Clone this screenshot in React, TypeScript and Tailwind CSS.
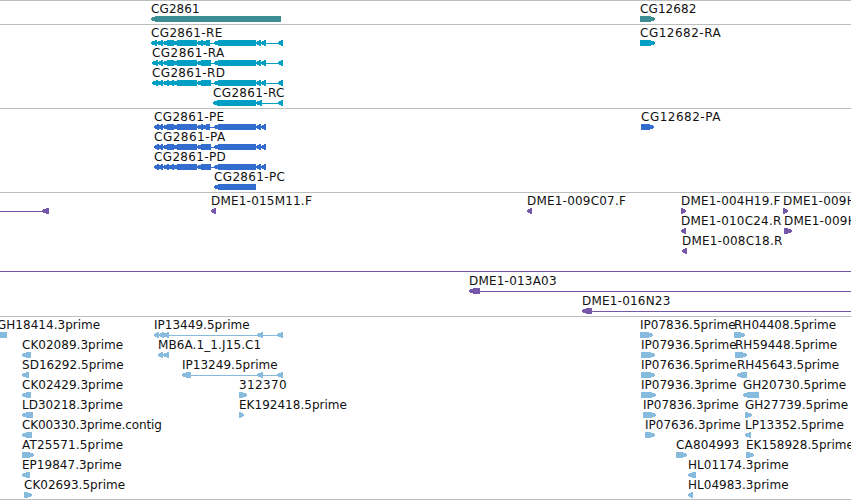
import React from 'react';

type Segment = [start: number, end: number, dir: 'l' | 'r' | 'b'];

interface Feature {
  label?: string;
  x: number;
  // visible width of the label, longer names are cut off
  w?: number;
  className?: string;
  segments: Segment[];
  line?: [number, number];
}

interface Track {
  color: string;
  tracking: string;
  rows: Feature[][];
}

const geneModel = (shift: number): Segment[] => [
  [151 + shift, 157 + shift, 'l'],
  [157 + shift, 163, 'l'],
  [163, 174, 'l'],
  [173, 197, 'l'],
];

const rightExons: Segment[] = [
  [214, 256, 'l'],
  [256, 261, 'l'],
  [261, 266, 'l'],
];

const tracks: Track[] = [
  {
    color: 'text-[#3b8e93]',
    tracking: 'tracking-[0.1px]',
    rows: [
      [
        { label: 'CG2861', x: 151, segments: [[151, 281, 'l']] },
        { label: 'CG12682', x: 640, segments: [[640, 655, 'r']] },
      ],
    ],
  },
  {
    color: 'text-[#009fc3]',
    tracking: 'tracking-[0.35px]',
    rows: [
      [
        { label: 'CG2861-RE', x: 151, segments: [...geneModel(0), [197, 203, 'l'], [202, 210, 'l'], ...rightExons, [278, 283, 'l']], line: [151, 283] },
        { label: 'CG12682-RA', x: 640, className: 'tracking-[0.5px]', segments: [[640, 655, 'r']] },
      ],
      [{ label: 'CG2861-RA', x: 152, className: 'tracking-[0.45px]', segments: [...geneModel(1), [197, 211, 'l'], ...rightExons, [278, 283, 'l']], line: [152, 283] }],
      [{ label: 'CG2861-RD', x: 152, segments: [[152, 158, 'l'], [157, 163, 'l'], [163, 169, 'l'], [168, 174, 'l'], [173, 197, 'l'], [197, 211, 'l'], ...rightExons, [278, 283, 'l']], line: [152, 283] }],
      [{ label: 'CG2861-RC', x: 213, segments: [[213, 256, 'l'], [256, 262, 'l'], [278, 283, 'l']], line: [213, 283] }],
    ],
  },
  {
    color: 'text-[#316cce]',
    tracking: 'tracking-[0.35px]',
    rows: [
      [
        { label: 'CG2861-PE', x: 154, segments: [[154, 159, 'l'], [158, 163, 'l'], [163, 174, 'l'], [173, 197, 'l'], [197, 203, 'l'], [202, 210, 'l'], ...rightExons], line: [154, 266] },
        { label: 'CG12682-PA', x: 641, className: 'tracking-[0.5px]', segments: [[641, 654, 'r']] },
      ],
      [{ label: 'CG2861-PA', x: 154, className: 'tracking-[0.5px]', segments: [[154, 159, 'l'], [158, 163, 'l'], [163, 174, 'l'], [173, 197, 'l'], [197, 211, 'l'], ...rightExons], line: [154, 266] }],
      [{ label: 'CG2861-PD', x: 154, segments: [[154, 159, 'l'], [158, 163, 'l'], [163, 169, 'l'], [168, 174, 'l'], [173, 197, 'l'], [197, 211, 'l'], ...rightExons], line: [154, 266] }],
      [{ label: 'CG2861-PC', x: 214, segments: [[214, 256, 'l']] }],
    ],
  },
  {
    color: 'text-[#7558aa]',
    tracking: 'tracking-[0.2px]',
    rows: [
      [
        { x: 0, segments: [[42, 49, 'l']], line: [0, 49] },
        { label: 'DME1-015M11.F', x: 211, w: 101, segments: [[211, 216, 'l']] },
        { label: 'DME1-009C07.F', x: 527, w: 99, segments: [[527, 532, 'l']] },
        { label: 'DME1-004H19.F', x: 681, w: 100, segments: [[681, 686, 'r']] },
        { label: 'DME1-009H07.F', x: 783, segments: [[783, 788, 'r']] },
      ],
      [
        { label: 'DME1-010C24.R', x: 681, w: 102, segments: [[681, 686, 'l']] },
        { label: 'DME1-009H07.R', x: 784, segments: [[784, 792, 'r']] },
      ],
      [{ label: 'DME1-008C18.R', x: 682, segments: [[682, 687, 'l']] }],
      [{ x: 0, segments: [], line: [0, 851] }],
      [{ label: 'DME1-013A03', x: 469, segments: [[469, 480, 'l']], line: [469, 851] }],
      [{ label: 'DME1-016N23', x: 582, segments: [[582, 592, 'l']], line: [582, 851] }],
    ],
  },
  {
    color: 'text-[#87bbdd]',
    tracking: 'tracking-[0.02px]',
    rows: [
      [
        { label: 'GH18414.3prime', x: -3, segments: [[0, 7, 'b']] },
        { label: 'IP13449.5prime', x: 154, segments: [[154, 159, 'l'], [159, 164, 'l'], [163, 169, 'l'], [257, 263, 'l'], [277, 283, 'l']], line: [154, 283] },
        { label: 'IP07836.5prime', x: 640, segments: [[640, 653, 'r']] },
        { label: 'RH04408.5prime', x: 734, segments: [[734, 745, 'r']] },
      ],
      [
        { label: 'CK02089.3prime', x: 22, segments: [[22, 31, 'l']] },
        { label: 'MB6A.1_1.J15.C1', x: 158, className: 'tracking-[0.1px]', segments: [[158, 163, 'l'], [163, 169, 'l']] },
        { label: 'IP07936.5prime', x: 641, segments: [[641, 655, 'r']] },
        { label: 'RH59448.5prime', x: 735, segments: [[735, 747, 'r']] },
      ],
      [
        { label: 'SD16292.5prime', x: 22, segments: [[22, 29, 'l']] },
        { label: 'IP13249.5prime', x: 182, segments: [[182, 191, 'l'], [257, 263, 'l'], [277, 283, 'l']], line: [182, 283] },
        { label: 'IP07636.5prime', x: 641, segments: [[641, 655, 'r']] },
        { label: 'RH45643.5prime', x: 737, segments: [[737, 747, 'l']] },
      ],
      [
        { label: 'CK02429.3prime', x: 22, segments: [[22, 31, 'l']] },
        { label: '312370', x: 239, className: 'tracking-[0.35px]', segments: [[239, 247, 'r']] },
        { label: 'IP07936.3prime', x: 641, segments: [[641, 656, 'r']] },
        { label: 'GH20730.5prime', x: 743, segments: [[743, 759, 'l']] },
      ],
      [
        { label: 'LD30218.3prime', x: 22, segments: [[22, 33, 'l']] },
        { label: 'EK192418.5prime', x: 239, segments: [[239, 244, 'r']] },
        { label: 'IP07836.3prime', x: 643, segments: [[643, 656, 'r']] },
        { label: 'GH27739.5prime', x: 745, segments: [[745, 752, 'r']] },
      ],
      [
        { label: 'CK00330.3prime.contig', x: 22, className: 'tracking-[-0.1px]', segments: [[22, 32, 'l']] },
        { label: 'IP07636.3prime', x: 645, segments: [[645, 655, 'r']] },
        { label: 'LP13352.5prime', x: 745, segments: [[745, 751, 'l']] },
      ],
      [
        { label: 'AT25571.5prime', x: 22, className: 'tracking-[0.15px]', segments: [[22, 34, 'r']] },
        { label: 'CA804993', x: 676, className: 'tracking-[0.15px]', segments: [[676, 687, 'r']] },
        { label: 'EK158928.5prime', x: 746, segments: [[746, 754, 'r']] },
      ],
      [
        { label: 'EP19847.3prime', x: 22, segments: [[22, 30, 'l']] },
        { label: 'HL01174.3prime', x: 688, segments: [[688, 696, 'l']] },
      ],
      [
        { label: 'CK02693.5prime', x: 24, segments: [[24, 32, 'r']] },
        { label: 'HL04983.3prime', x: 688, segments: [[688, 693, 'l']] },
      ],
    ],
  },
];

function points([start, end, dir]: Segment) {
  if (dir === 'b') return `${start},0 ${end},0 ${end},6 ${start},6`;
  const head = Math.min(5, end - start - 1);
  const tip = dir === 'l' ? start : end;
  const base = dir === 'l' ? end : start;
  const step = dir === 'l' ? 1 : -1;
  const mid = tip + (step * head) / 2;
  const neck = tip + step * head;
  return `${tip},2 ${mid},1 ${neck},0 ${base},0 ${base},6 ${neck},6 ${mid},5 ${tip},4`;
}

function Row({ features }: { features: Feature[] }) {
  return (
    <div className="relative h-5 w-[851px]">
      {features.map((feature, i) => (
        feature.label && (
          <span
            key={i}
            className={`absolute top-px h-[17px] overflow-hidden whitespace-nowrap leading-[15px] text-[#111] ${feature.className ?? ''}`}
            style={{ left: feature.x, width: feature.w }}
          >
            {feature.label}
          </span>
        )
      ))}
      <svg className="absolute top-[15px] left-0" width="851" height="6" shapeRendering="crispEdges" fill="currentColor">
        {features.map((feature, i) => (
          <g key={i}>
            {feature.line && <rect x={feature.line[0]} y="3" width={feature.line[1] - feature.line[0]} height="1" />}
            {feature.segments.map((segment, j) => <polygon key={j} points={points(segment)} />)}
          </g>
        ))}
      </svg>
    </div>
  );
}

export default function App() {
  return (
    <div className="h-[500px] w-[851px] overflow-hidden border-b border-[#bebebe] bg-white font-['DejaVu_Sans',sans-serif] text-[12px]">
      {tracks.map((track, i) => (
        <div key={i} className={`border-t border-[#bebebe] pb-[3px] ${track.color} ${track.tracking}`}>
          {track.rows.map((row, j) => <Row key={j} features={row} />)}
        </div>
      ))}
    </div>
  );
}
